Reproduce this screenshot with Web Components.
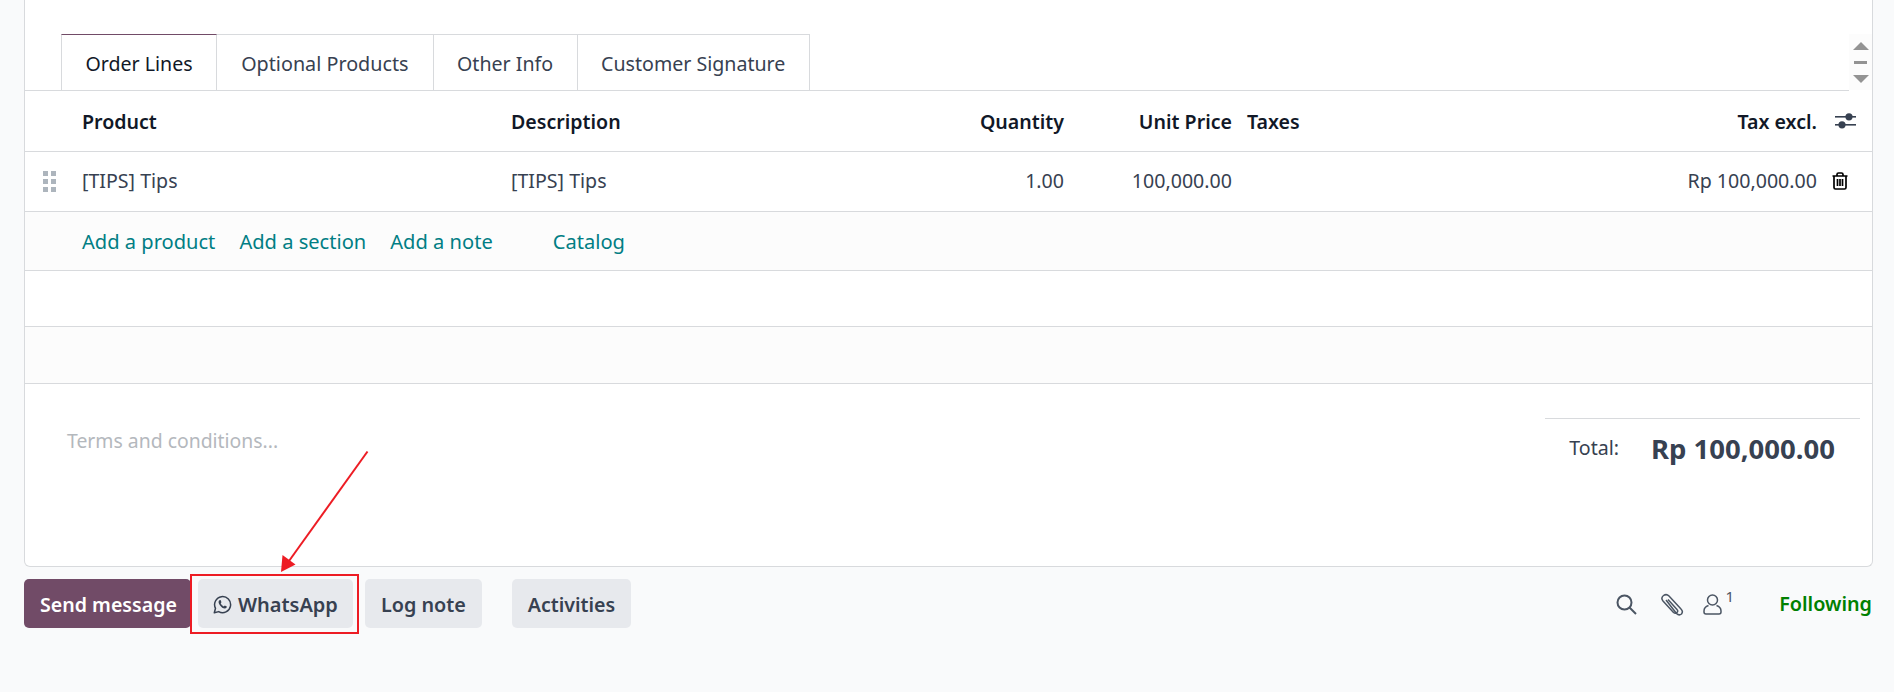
<!DOCTYPE html>
<html>
<head>
<meta charset="utf-8">
<title>Sales order</title>
<style>
  html, body { margin: 0; padding: 0; }
  body { background: #f9fafb; font-family: "Noto Sans", sans-serif; font-size: 19.6px; color: #374151; height: 692px; overflow: hidden; }
</style>
</head>
<body>
<order-page>
  <order-card>
    <order-tabs slot="tabs"></order-tabs>
    <order-lines slot="lines"></order-lines>
    <order-footer slot="footer"></order-footer>
  </order-card>
  <chatter-bar slot="chatter"></chatter-bar>
</order-page>

<script>
class OrderPage extends HTMLElement {
  constructor() {
    super();
    this.attachShadow({ mode: "open" });
  }
  connectedCallback() {
    this.shadowRoot.innerHTML = `
    <style>
      :host { display: block; position: relative; height: 692px; padding: 0 21px 0 24px; }
      #arrow { position: absolute; left: 270px; top: 445px; }
      #callout { position: absolute; left: 190px; top: 574px; width: 165px; height: 56px; border: 2px solid #ed1c24; }
    </style>
    <slot></slot>
    <slot name="chatter"></slot>
    <div id="callout"></div>
    <svg id="arrow" width="105" height="130" viewBox="0 0 105 130">
      <line x1="97.5" y1="6.5" x2="19" y2="116" stroke="#ed1c24" stroke-width="2"/>
      <polygon points="11,127 12.500,110 25.500,119.500" fill="#ed1c24"/>
    </svg>
    `;
  }
}

class OrderCard extends HTMLElement {
  constructor() {
    super();
    this.attachShadow({ mode: "open" });
  }
  connectedCallback() {
    this.shadowRoot.innerHTML = `
    <style>
      :host {
        display: block;
        height: 567px;
        box-sizing: border-box;
        background: #fff;
        border: 1px solid #d8dadd;
        border-top: 0;
        border-radius: 0 0 6px 6px;
        padding-top: 34px;
      }
    </style>
    <slot name="tabs"></slot>
    <slot name="lines"></slot>
    <slot name="footer"></slot>
    `;
  }
}

class OrderTabs extends HTMLElement {
  constructor() {
    super();
    this.attachShadow({ mode: "open" });
  }
  connectedCallback() {
    this.shadowRoot.innerHTML = `
    <style>
      :host { display: flex; height: 57px; box-sizing: border-box; position: relative; }
      #list { display: flex; flex: 1; padding-left: 36px; border-bottom: 1px solid #d8dadd; }
      .tab {
        display: flex;
        align-items: center;
        height: 56px;
        box-sizing: border-box;
        padding: 1px 23.500px 0;
        border: 1px solid #d8dadd;
        border-bottom: 0;
        margin-right: -1px;
        color: #374151;
        white-space: nowrap;
      }
      .tab.wide { padding: 1px 24px 0; font-size: 19.750px; }
      .tab.active { color: #111827; border-top-color: #714b67; position: relative; }
      #scroller {
        width: 23px;
        height: 56px;
        background: #fcfcfc;
        display: flex;
        flex-direction: column;
        align-items: center;
        padding-top: 8px;
        box-sizing: border-box;
      }
      .up, .down { width: 0; height: 0; border-left: 8px solid transparent; border-right: 8px solid transparent; }
      .up { border-bottom: 8px solid #939393; }
      .down { border-top: 8px solid #939393; }
      .dash { width: 13px; height: 3px; background: #939393; margin: 11px 0 11px; }
    </style>
    <div id="list">
      <div class="tab active">Order Lines</div>
      <div class="tab wide">Optional Products</div>
      <div class="tab">Other Info</div>
      <div class="tab">Customer Signature</div>
    </div>
    <div id="scroller"><div class="up"></div><div class="dash"></div><div class="down"></div></div>
    `;
  }
}

class OrderLines extends HTMLElement {
  constructor() {
    super();
    this.attachShadow({ mode: "open" });
  }
  connectedCallback() {
    this.shadowRoot.innerHTML = `
    <style>
      :host { display: block; }
      .row {
        display: grid;
        grid-template-columns: 57px 429px 553px 168px 15px 1fr 55px;
        align-items: center;
        border-bottom: 1px solid #d8dadd;
        box-sizing: border-box;
      }
      .head { height: 61px; font-weight: 600; color: #111827; }
      .line { height: 60px; padding-bottom: 2px; }
      .desc { display: flex; justify-content: space-between; }
      .num { text-align: right; }
      .end { display: flex; justify-content: space-between; white-space: nowrap; }
      .tool { display: flex; }
      .handle { display: grid; grid-template-columns: 5px 5px; grid-auto-rows: 5px; gap: 3px; padding-left: 18px; margin-top: 2px; }
      .handle i { background: #adb5bd; }
      .adds { height: 59px; background: #fcfcfc; display: flex; align-items: center; padding-left: 57px; color: #017e84; font-size: 20.100px; border-bottom: 1px solid #d8dadd; box-sizing: border-box; }
      .adds span { margin-right: 24px; }
      .adds .catalog { margin-left: 36px; }
      .blank { border-bottom: 1px solid #d8dadd; box-sizing: border-box; }
      .b1 { height: 56px; background: #fff; }
      .b2 { height: 57px; background: #fcfcfc; }
    </style>
    <div class="row head">
      <span></span>
      <span>Product</span>
      <span class="desc"><span>Description</span><span>Quantity</span></span>
      <span class="num">Unit Price</span>
      <span></span>
      <span class="end"><span>Taxes</span><span>Tax excl.</span></span>
      <span class="tool" style="padding-left:18px">
        <svg width="22" height="18" viewBox="0 0 22 18" fill="#374151">
          <rect x="0" y="4" width="21" height="1.600"/><rect x="0" y="12" width="21" height="1.600"/>
          <circle cx="14" cy="4.800" r="3.600"/><circle cx="7" cy="12.800" r="3.600"/>
        </svg>
      </span>
    </div>
    <div class="row line">
      <span class="handle"><i></i><i></i><i></i><i></i><i></i><i></i></span>
      <span>[TIPS] Tips</span>
      <span class="desc"><span>[TIPS] Tips</span><span>1.00</span></span>
      <span class="num">100,000.00</span>
      <span></span>
      <span class="end"><span></span><span>Rp 100,000.00</span></span>
      <span class="tool" style="padding-left:15px">
        <svg width="16" height="18" viewBox="0 0 16 18" fill="none" stroke="#000" stroke-width="1.700">
          <path d="M0.500 4H15.500M5 4V2.500Q5 1 6.500 1H9.500Q11 1 11 2.500V4"/>
          <path d="M2 4V15.500Q2 17 3.500 17H12.500Q14 17 14 15.500V4"/>
          <path d="M5.500 7V14M8 7V14M10.500 7V14"/>
        </svg>
      </span>
    </div>
    <div class="adds"><span>Add a product</span><span>Add a section</span><span>Add a note</span><span class="catalog">Catalog</span></div>
    <div class="blank b1"></div>
    <div class="blank b2"></div>
    `;
  }
}

class OrderFooter extends HTMLElement {
  constructor() {
    super();
    this.attachShadow({ mode: "open" });
  }
  connectedCallback() {
    this.shadowRoot.innerHTML = `
    <style>
      :host { display: flex; justify-content: space-between; align-items: flex-start; padding: 34px 12px 0 42px; }
      #terms { color: #b4b8bd; margin-top: 9px; font-size: 19.400px; }
      #totals { width: 315px; border-top: 1px solid #d8dadd; display: flex; align-items: center; justify-content: flex-end; padding: 11px 25px 0 0; box-sizing: border-box; }
      #label { margin-right: 32px; margin-top: -2px; }
      #total { font-size: 27.500px; font-weight: 700; white-space: nowrap; }
    </style>
    <div id="terms">Terms and conditions...</div>
    <div id="totals"><span id="label">Total:</span><span id="total">Rp 100,000.00</span></div>
    `;
  }
}

class ChatterBar extends HTMLElement {
  constructor() {
    super();
    this.attachShadow({ mode: "open" });
  }
  connectedCallback() {
    this.shadowRoot.innerHTML = `
    <style>
      :host { display: flex; align-items: center; margin-top: 12px; height: 49px; }
      .btn { display: flex; align-items: center; gap: 5px; height: 49px; box-sizing: border-box; padding: 1px 16px 0; border-radius: 5px; background: #e7e9ed; color: #374151; font-weight: 600; white-space: nowrap; }
      .primary { background: #714b67; color: #fff; margin-right: 7px; padding-right: 14px; }
      .wa { padding: 1px 15px 0; font-size: 20px; gap: 6px; }
      .log { margin-left: 12px; font-size: 19.800px; }
      .act { margin-left: 30px; }
      #side { margin-left: auto; display: flex; align-items: center; padding-top: 2px; }
      #follow { color: #008000; font-weight: 600; font-size: 19.800px; margin-left: 45px; padding-right: 1px; margin-top: -2px; }
      sup { font-size: 15px; margin-left: 4px; align-self: flex-start; line-height: 1; color: #4b5563; margin-top: -3px; }
      .icon { display: flex; }
    </style>
    <div class="btn primary">Send message</div>
    <div class="btn wa">
      <svg width="19" height="19" viewBox="0 0 19 19" fill="none" stroke="#374151" stroke-width="1.500">
        <path d="M1.300 17.800L2.500 13.300A8 8 0 1 1 5.700 16.600Z" stroke-linejoin="round"/>
        <path d="M6.400 5.200C5.200 6.200 5.300 7.700 6.700 9.900C8.500 12.500 10.500 13.700 12.300 13.400C13.300 13.200 13.900 12.500 13.800 11.600L11.800 10.500L10.700 11.400C9.500 10.900 8.300 9.700 7.700 8.300L8.500 7.200L7.600 5.100Z" fill="#374151" stroke="none"/>
      </svg>
      WhatsApp
    </div>
    <div class="btn log">Log note</div>
    <div class="btn act">Activities</div>
    <div id="side">
      <svg class="icon" width="21" height="21" viewBox="0 0 21 21" fill="none" stroke="#4b5563" stroke-width="2">
        <circle cx="8.500" cy="8.500" r="7"/><path d="M13.500 13.500L20 20"/>
      </svg>
      <svg class="icon" style="margin-left:23px" width="24" height="24" viewBox="0 0 24 24" fill="none" stroke="#4b5563" stroke-width="1.500">
        <path d="M6 7L16.500 20.500Q19 23 21.500 21Q23.500 18.500 21 16L9 3Q6.500 0.500 3.500 2.500Q0.500 5 3 8L13.500 19.500Q15.500 21 17 19.500Q18.500 18 17 16.500L8 6.500"/>
      </svg>
      <svg class="icon" style="margin-left:19px" width="19" height="21" viewBox="0 0 19 21" fill="none" stroke="#4b5563" stroke-width="1.500">
        <circle cx="9.500" cy="6" r="5"/>
        <path d="M5.500 11.500Q1 13 1 17V18Q1 20 3 20H16Q18 20 18 18V17Q18 13 13.500 11.500"/>
      </svg>
      <sup>1</sup>
      <span id="follow">Following</span>
    </div>
    `;
  }
}

customElements.define("order-page", OrderPage);
customElements.define("order-card", OrderCard);
customElements.define("order-tabs", OrderTabs);
customElements.define("order-lines", OrderLines);
customElements.define("order-footer", OrderFooter);
customElements.define("chatter-bar", ChatterBar);
</script>
</body>
</html>
